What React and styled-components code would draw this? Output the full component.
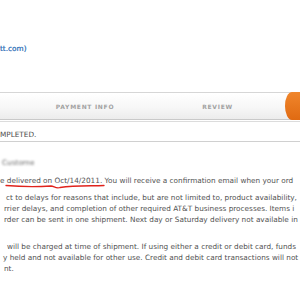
import React from 'react';
import styled, { createGlobalStyle } from 'styled-components';

const Global = createGlobalStyle`
  html, body {
    margin: 0;
    padding: 0;
    background: #fff;
    overflow: hidden;
  }
`;

const Frame = styled.div`
  width: 300px;
  height: 300px;
  overflow: hidden;
  font-family: "DejaVu Sans", Verdana, sans-serif;
  font-size: 7.3px;
  color: #525252;
`;

const Header = styled.div`
  height: 92px;
  box-sizing: border-box;
  padding-top: 43px;
`;

const SiteLink = styled.div`
  line-height: 11px;
  color: #2468b4;
  white-space: nowrap;
  -webkit-text-stroke: 0.2px #2468b4;
`;

const StepBar = styled.div`
  height: 28px;
  box-sizing: border-box;
  display: flex;
  border-top: 1px solid #d6d6d6;
  border-bottom: 1px solid #c9c9c9;
  background: linear-gradient(#ffffff, #f7f7f7 55%, #ececec);
  padding-left: 20px;
`;

const Step = styled.div`
  width: ${p => p.$w}px;
  flex: none;
  display: flex;
  align-items: center;
  justify-content: center;
  font-size: 6px;
  font-weight: bold;
  letter-spacing: 0.7px;
  color: #a2a2a2;
  text-transform: uppercase;
`;

const ActiveStep = styled.div`
  flex: 1;
  margin: -1px 0;
  background: linear-gradient(#f0862c, #e06a12);
  border-radius: 7px 0 0 7px / 14px 0 0 14px;
`;

const StatusRow = styled.div`
  margin-top: 1px;
  border-top: 1px solid #dcdcdc;
  border-bottom: 1px solid #d0d0d0;
  padding: 7px 0 1px;
  line-height: 11px;
  text-transform: uppercase;
  color: #4c4c4c;
  white-space: nowrap;
`;

const Body = styled.div`
  padding-top: 15px;
`;

const Blurred = styled.div`
  line-height: 11px;
  color: #6a6a6a;
  filter: blur(1.1px);
  padding-left: 2px;
`;

const Para = styled.div`
  margin-top: ${p => p.$gap}px;
`;

const Line = styled.div`
  line-height: 11px;
  white-space: nowrap;
  padding-left: ${p => p.$indent || 0}px;
`;

const Marked = styled.span`
  position: relative;
`;

const Scribble = styled.svg`
  position: absolute;
  left: -2px;
  top: 8px;
  width: 100px;
  height: 8px;
  overflow: visible;
`;

export default function App() {
  return (
    <Frame>
      <Global />
      <Header>
        <SiteLink>tt.com)</SiteLink>
      </Header>
      <StepBar>
        <Step $w={130}>Payment Info</Step>
        <Step $w={135}>Review</Step>
        <ActiveStep />
      </StepBar>
      <StatusRow>mpleted.</StatusRow>
      <Body>
        <Blurred>Custome</Blurred>
        <Para $gap={7}>
          <Line>
            e{' '}
            <Marked>
              delivered on Oct/14/2011
              <Scribble viewBox="0 0 100 8">
                <path
                  d="M1 1.5 C 20 3, 37 2.5, 46 2 C 49 2, 51 5, 55 3.5 C 69 1.5, 84 2, 99 1.5"
                  fill="none"
                  stroke="#e0231c"
                  strokeWidth="1.3"
                  strokeLinecap="round"
                />
              </Scribble>
            </Marked>
            . You will receive a confirmation email when your ord
          </Line>
        </Para>
        <Para $gap={6}>
          <Line $indent={6}>ct to delays for reasons that include, but are not limited to, product availability,</Line>
          <Line $indent={4}>rrier delays, and completion of other required AT&amp;T business processes. Items i</Line>
          <Line $indent={4}>rder can be sent in one shipment. Next day or Saturday delivery not available in</Line>
        </Para>
        <Para $gap={16}>
          <Line $indent={7}>will be charged at time of shipment. If using either a credit or debit card, funds</Line>
          <Line $indent={3}>y held and not available for other use. Credit and debit card transactions will not</Line>
          <Line $indent={4}>nt.</Line>
        </Para>
      </Body>
    </Frame>
  );
}
